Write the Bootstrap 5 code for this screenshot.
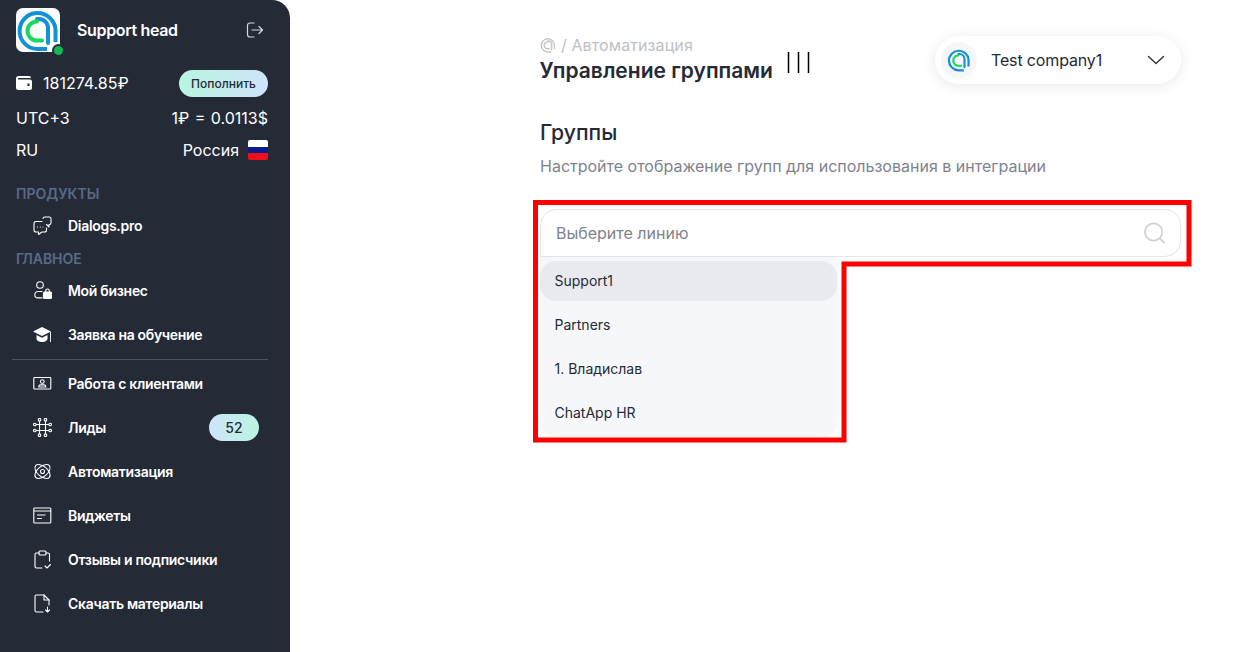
<!DOCTYPE html>
<html lang="ru">
<head>
  <meta charset="UTF-8" />
  <meta name="viewport" content="width=device-width, initial-scale=1" />
  <title>Управление группами</title>
  <link href="https://cdn.jsdelivr.net/npm/bootstrap@5.3.0/dist/css/bootstrap.min.css" rel="stylesheet" />
  <style>
    html, body { height: 100%; }
    body {
      font-family: Inter, "Liberation Sans", sans-serif;
      background: #fff;
      color: #252a37;
      overflow: hidden;
    }
    .page-wrap { height: 652px; position: relative; }

    /* logo colours, grey in the breadcrumb */
    .lg-blue { stroke: var(--logo-blue, #1290d8); }
    .lg-green { stroke: var(--logo-green, #16d85c); }
    .logo-grey { --logo-blue: #c4c6ca; --logo-green: #c4c6ca; }

    /* sidebar */
    .side {
      width: 290px;
      flex: 0 0 290px;
      background: #252a37;
      border-top-right-radius: 18px;
      color: #fff;
      padding: 8px 22px 0 16px;
    }
    .side-top { height: 44px; }
    .logo-box {
      width: 44px; height: 44px;
      background: #fff;
      border-radius: 7px;
      position: relative;
    }
    .logo-box svg { display: block; }
    .online-dot {
      position: absolute;
      right: -5px; bottom: -5px;
      width: 13px; height: 13px;
      background: #0dbb50;
      border: 2px solid #252a37;
      border-radius: 50%;
    }
    .side-name { font-size: 16px; font-weight: 600; margin-left: 17px; letter-spacing: -.35px; }
    .side-exit { margin-left: auto; margin-right: 4px; }
    .info-row { font-size: 16px; line-height: 20px; }
    .wallet-row { margin-top: 17px; height: 27px; }
    .wallet-ico { margin-right: 11px; }
    .rate-row { margin-top: 12px; word-spacing: 1px; }
    .region-row { margin-top: 12px; }
    .topup-btn {
      width: 89px; height: 27px;
      margin-top: 2px;
      padding: 0;
      border: 0;
      border-radius: 14px;
      font-size: 12px;
      font-weight: 500;
      color: #252a37;
      background: linear-gradient(90deg, #b9f5e0, #cfe4fb);
    }
    .flag-ru {
      width: 20px; height: 20px;
      border-radius: 2px;
      margin-left: 9px;
      background: linear-gradient(#fff 0 33%, #0b1a8c 33% 66%, #f0101c 66%);
    }
    .side-caption {
      font-size: 14px;
      font-weight: 600;
      line-height: 17px;
      color: #5a6a88;
    }
    .caption-first { margin-top: 25px; }
    .caption-main { margin-top: 1px; }
    .menu-link {
      height: 44px;
      padding: 0 0 0 17px;
      color: #fff;
      font-size: 14px;
      font-weight: 600;
      letter-spacing: -.3px;
      text-decoration: none;
    }
    .menu-dialogs { height: 47px; }
    .menu-first { margin-top: 1px; }
    .menu-ico { width: 19px; height: 19px; margin-right: 16px; flex: none; }
    .side-line { border-top: 1px solid #4f5462; margin: 3px 0 1px -4px; opacity: 1; }
    .lead-count {
      margin-left: auto;
      margin-right: 9px;
      width: 50px; height: 27px;
      border-radius: 14px;
      font-size: 14px;
      font-weight: 500;
      letter-spacing: 0;
      color: #252a37;
      background: linear-gradient(90deg, #cfe4fb, #b9f5e0);
    }

    /* main column */
    .main-col { flex: 1; padding: 36px 64px 0 250px; }
    .crumbs { font-size: 16px; line-height: 18px; color: #bdbfc5; letter-spacing: .1px; }
    .crumb-ico { margin-right: 5px; }
    .page-title { font-size: 21px; font-weight: 600; line-height: 26px; margin: 4px 0 0 -.5px; }
    .title-bars { width: 23px; height: 21px; margin-left: 14px; margin-top: -2px; }
    .company-pill {
      width: 246px; height: 48px;
      border-radius: 24px;
      background: #fff;
      box-shadow: 0 2px 14px rgba(37, 42, 55, .1);
      padding: 0 16px 0 6px;
      font-size: 16px;
      letter-spacing: -.15px;
    }
    .company-ico {
      width: 36px; height: 36px;
      border-radius: 50%;
      background: #f4f6f9;
      margin-right: 14px;
    }
    .section-title { font-size: 21.200px; font-weight: 500; line-height: 28px; margin: 34px 0 0; }
    .section-hint { font-size: 16px; line-height: 20px; color: #80838c; margin: 10px 0 0; }
    .line-picker { margin-top: 33px; }
    .line-search {
      height: 48px;
      border: 1px solid #e3e5ee;
      border-radius: 16px 16px 16px 0;
      padding: 0 14px 0 15px;
      background: #fff;
    }
    .line-search .form-control {
      border: 0;
      padding: 0;
      box-shadow: none;
      font-size: 16px;
      color: #252a37;
    }
    .line-search .form-control::placeholder { color: #80838c; opacity: 1; }
    .line-drop {
      width: 297px;
      height: 177px;
      padding: 4px 0;
      background: #f6f7fa;
      border-radius: 0 0 16px 16px;
      box-shadow: 0 2px 5px rgba(37, 42, 55, .07);
      gap: 4px;
    }
    .line-drop .list-group-item {
      height: 40px;
      padding: 0 14.500px;
      line-height: 40px;
      border: 0;
      border-radius: 16px;
      background: transparent;
      font-size: 14px;
      color: #252a37;
    }
    .line-drop .list-group-item.active { background: #e9eaef; color: #252a37; }

    /* red note drawn over the page */
    .red-note { position: absolute; left: 0; top: 0; pointer-events: none; }
  </style>
</head>
<body>

  <svg width="0" height="0" class="d-block" aria-hidden="true">
    <symbol id="logo-a" viewBox="0 0 44 44">
      <path class="lg-blue" d="M31 41H21.500A18 18 0 1 1 39.500 21.500V34" fill="none" stroke-width="4" />
      <path class="lg-blue" d="M21 11H23A9 9 0 0 1 32 20V35" fill="none" stroke-width="4" stroke-linecap="round" />
      <path class="lg-green" d="M21 13.500A9.500 9.500 0 0 0 21 32.500H26" fill="none" stroke-width="4" stroke-linecap="round" />
    </symbol>
  </svg>

  <div class="page-wrap d-flex">
    <aside class="side">
      <div class="side-top d-flex align-items-center">
        <div class="logo-box">
          <svg width="44" height="44"><use href="#logo-a" /></svg>
          <span class="online-dot"></span>
        </div>
        <span class="side-name">Support head</span>
        <svg class="side-exit" width="18" height="18" viewBox="0 0 18 18" fill="none" stroke="#d8dade" stroke-width="1.200" stroke-linecap="round" stroke-linejoin="round">
          <path d="M8 2H4A2.500 2.500 0 0 0 1.500 4.500v9A2.500 2.500 0 0 0 4 16h4" />
          <path d="M6 9H16.500M13 5.500 16.500 9 13 12.500" />
        </svg>
      </div>

      <div class="info-row wallet-row d-flex align-items-center justify-content-between">
        <span class="d-flex align-items-center">
          <svg width="16" height="14" viewBox="0 0 16 14" class="wallet-ico">
            <path d="M2.500 0H13a2 2 0 0 1 2 2H2.500a.8.8 0 0 0 0 1.500H14a2 2 0 0 1 2 2V12a2 2 0 0 1-2 2H2.500A2.500 2.500 0 0 1 0 11.500v-9A2.500 2.500 0 0 1 2.500 0z" fill="#fff" />
            <rect x="11.500" y="7.500" width="2" height="2.500" fill="#252a37" />
          </svg>
          <span>181274.85₽</span>
        </span>
        <button type="button" class="btn topup-btn">Пополнить</button>
      </div>
      <div class="info-row rate-row d-flex justify-content-between">
        <span>UTC+3</span><span>1₽ = 0.0113$</span>
      </div>
      <div class="info-row region-row d-flex justify-content-between">
        <span>RU</span>
        <span class="d-flex align-items-center">Россия<span class="flag-ru d-inline-block"></span></span>
      </div>

      <div class="side-caption caption-first">ПРОДУКТЫ</div>
      <a class="menu-link menu-dialogs d-flex align-items-center" href="#">
        <svg class="menu-ico" viewBox="0 0 19 19" fill="none" stroke="#fff" stroke-width="1.100" stroke-linecap="round" stroke-linejoin="round">
          <path d="M9 5.500H3a2 2 0 0 0-2 2V14a2 2 0 0 0 2 2h2.500v2.500L9 16h2.500a2 2 0 0 0 2-2v-2" />
          <path d="M10 2.500A1.700 1.700 0 0 1 11.700 1h5A1.500 1.500 0 0 1 18 2.500V7a1.500 1.500 0 0 1-1.500 1.500H16V11l-2.500-2.500" />
          <path d="M4.500 11h.01M7.300 11h.01M10 11h.01" />
        </svg>
        Dialogs.pro
      </a>
      <div class="side-caption caption-main">ГЛАВНОЕ</div>

      <nav class="nav flex-column flex-nowrap">
        <a class="menu-link menu-first d-flex align-items-center" href="#">
          <svg class="menu-ico" viewBox="0 0 19 19" fill="none" stroke="#fff" stroke-width="1.100" stroke-linecap="round">
            <circle cx="7" cy="4" r="3.300" />
            <path d="M9 10.500H5a3.200 3.200 0 0 0 0 6.400h4" />
            <rect x="10.500" y="11" width="8" height="6.500" rx="1" fill="#fff" />
            <path d="M12.700 11V9.800a1.700 1.700 0 0 1 3.600 0V11" />
          </svg>
          Мой бизнес
        </a>
        <a class="menu-link d-flex align-items-center" href="#">
          <svg class="menu-ico" viewBox="0 0 19 19">
            <path d="M9 2 0 6.500l9 4.500 9-4.500z" fill="#fff" />
            <path d="M3.500 10v3.500C3.500 15.500 6 17 9 17s5.500-1.500 5.500-3.500V10L9 12.800z" fill="#fff" />
            <path d="M17.500 7v10" stroke="#fff" stroke-width=".9" />
          </svg>
          Заявка на обучение
        </a>
        <hr class="side-line" />
        <a class="menu-link d-flex align-items-center" href="#">
          <svg class="menu-ico" viewBox="0 0 19 19" fill="none" stroke="#fff" stroke-width="1.100" stroke-linejoin="round">
            <rect x=".8" y="3.500" width="17" height="11.500" rx=".8" />
            <circle cx="9.300" cy="7.600" r="1.900" />
            <path d="M5.800 13v-.5c0-1 1-1.600 2-1.600h3c1 0 2 .6 2 1.600v.5z" />
          </svg>
          Работа с клиентами
        </a>
        <a class="menu-link d-flex align-items-center" href="#">
          <svg class="menu-ico" viewBox="0 0 19 19" fill="none" stroke="#fff" stroke-width="1.100" stroke-linecap="round">
            <path d="M6.500 3.500V15.500M12.500 3.500V15.500M3.500 6.500H15.500M3.500 12.500H15.500" />
            <circle cx="6.500" cy="1.800" r="1.300" /><circle cx="12.500" cy="1.800" r="1.300" />
            <circle cx="1.800" cy="6.500" r="1.300" /><circle cx="17.200" cy="6.500" r="1.300" />
            <circle cx="1.800" cy="12.500" r="1.300" /><circle cx="17.200" cy="12.500" r="1.300" />
            <circle cx="6.500" cy="17.200" r="1.300" /><circle cx="12.500" cy="17.200" r="1.300" />
          </svg>
          Лиды
          <span class="lead-count d-flex align-items-center justify-content-center">52</span>
        </a>
        <a class="menu-link d-flex align-items-center" href="#">
          <svg class="menu-ico" viewBox="0 0 19 19" fill="none" stroke="#fff" stroke-width="1.100">
            <ellipse cx="9.500" cy="9.500" rx="9" ry="5" transform="rotate(40 9.500 9.500)" />
            <ellipse cx="9.500" cy="9.500" rx="9" ry="5" transform="rotate(-40 9.500 9.500)" />
            <circle cx="9.500" cy="9.500" r="2" />
          </svg>
          Автоматизация
        </a>
        <a class="menu-link d-flex align-items-center" href="#">
          <svg class="menu-ico" viewBox="0 0 19 19" fill="none" stroke="#fff" stroke-width="1.100">
            <rect x=".8" y="2" width="17" height="15" rx=".8" />
            <path d="M1 5h17M4 9h8.500M4 12.500h5" />
          </svg>
          Виджеты
        </a>
        <a class="menu-link d-flex align-items-center" href="#">
          <svg class="menu-ico" viewBox="0 0 19 19" fill="none" stroke="#fff" stroke-width="1.100" stroke-linecap="round" stroke-linejoin="round">
            <path d="M6 3H3.500A1.500 1.500 0 0 0 2 4.500v12A1.500 1.500 0 0 0 3.500 18H9" />
            <path d="M13 3h2a1.500 1.500 0 0 1 1.500 1.500V11" />
            <rect x="6" y="1" width="7" height="4" rx="1" />
            <path d="M12 16l2 2 3.500-3.500" />
          </svg>
          Отзывы и подписчики
        </a>
        <a class="menu-link d-flex align-items-center" href="#">
          <svg class="menu-ico" viewBox="0 0 19 19" fill="none" stroke="#fff" stroke-width="1.100" stroke-linecap="round" stroke-linejoin="round">
            <path d="M10 18H3.500A1.500 1.500 0 0 1 2 16.500v-14A1.500 1.500 0 0 1 3.500 1H11l5 5v5" />
            <path d="M11 1v5h5" />
            <path d="M14.500 13v5M12.500 16l2 2 2-2" />
          </svg>
          Скачать материалы
        </a>
      </nav>
    </aside>

    <main class="main-col">
      <div class="d-flex justify-content-between align-items-start">
        <div>
          <div class="crumbs d-flex align-items-center">
            <svg width="16" height="16" class="crumb-ico logo-grey"><use href="#logo-a" /></svg>
            <span>/ Автоматизация</span>
          </div>
          <div class="d-flex align-items-start">
            <h1 class="page-title">Управление группами</h1>
            <svg class="title-bars" viewBox="0 0 23 21" stroke="#000" stroke-width="1.500">
              <path d="M1.500 0v21M11.500 0v21M21.500 0v21" />
            </svg>
          </div>
        </div>
        <div class="company-pill d-flex align-items-center">
          <span class="company-ico d-flex align-items-center justify-content-center">
            <svg width="24" height="24"><use href="#logo-a" /></svg>
          </span>
          <span>Test company1</span>
          <svg class="ms-auto" width="18" height="10" viewBox="0 0 18 10" fill="none" stroke="#252a37" stroke-width="1.300" stroke-linecap="round" stroke-linejoin="round">
            <path d="M1.500 1.500 9 8.500l7.500-7" />
          </svg>
        </div>
      </div>

      <h2 class="section-title">Группы</h2>
      <p class="section-hint">Настройте отображение групп для использования в интеграции</p>

      <div class="line-picker">
        <div class="line-search d-flex align-items-center">
          <input class="form-control" type="text" placeholder="Выберите линию" />
          <svg width="24" height="24" viewBox="0 0 24 24" fill="none" stroke="#cfd0d3" stroke-width="1.800" stroke-linecap="round">
            <circle cx="11" cy="11" r="9" />
            <path d="M18 18l4 4" />
          </svg>
        </div>
        <div class="line-drop list-group">
          <a href="#" class="list-group-item active">Support1</a>
          <a href="#" class="list-group-item">Partners</a>
          <a href="#" class="list-group-item">1. Владислав</a>
          <a href="#" class="list-group-item">ChatApp HR</a>
        </div>
      </div>
    </main>

    <svg class="red-note" width="1245" height="652" fill="none" stroke="#ff0000" stroke-width="5">
      <path d="M535.500 202.500H1189V264H844V440H535.500Z" />
    </svg>
  </div>

</body>
</html>
